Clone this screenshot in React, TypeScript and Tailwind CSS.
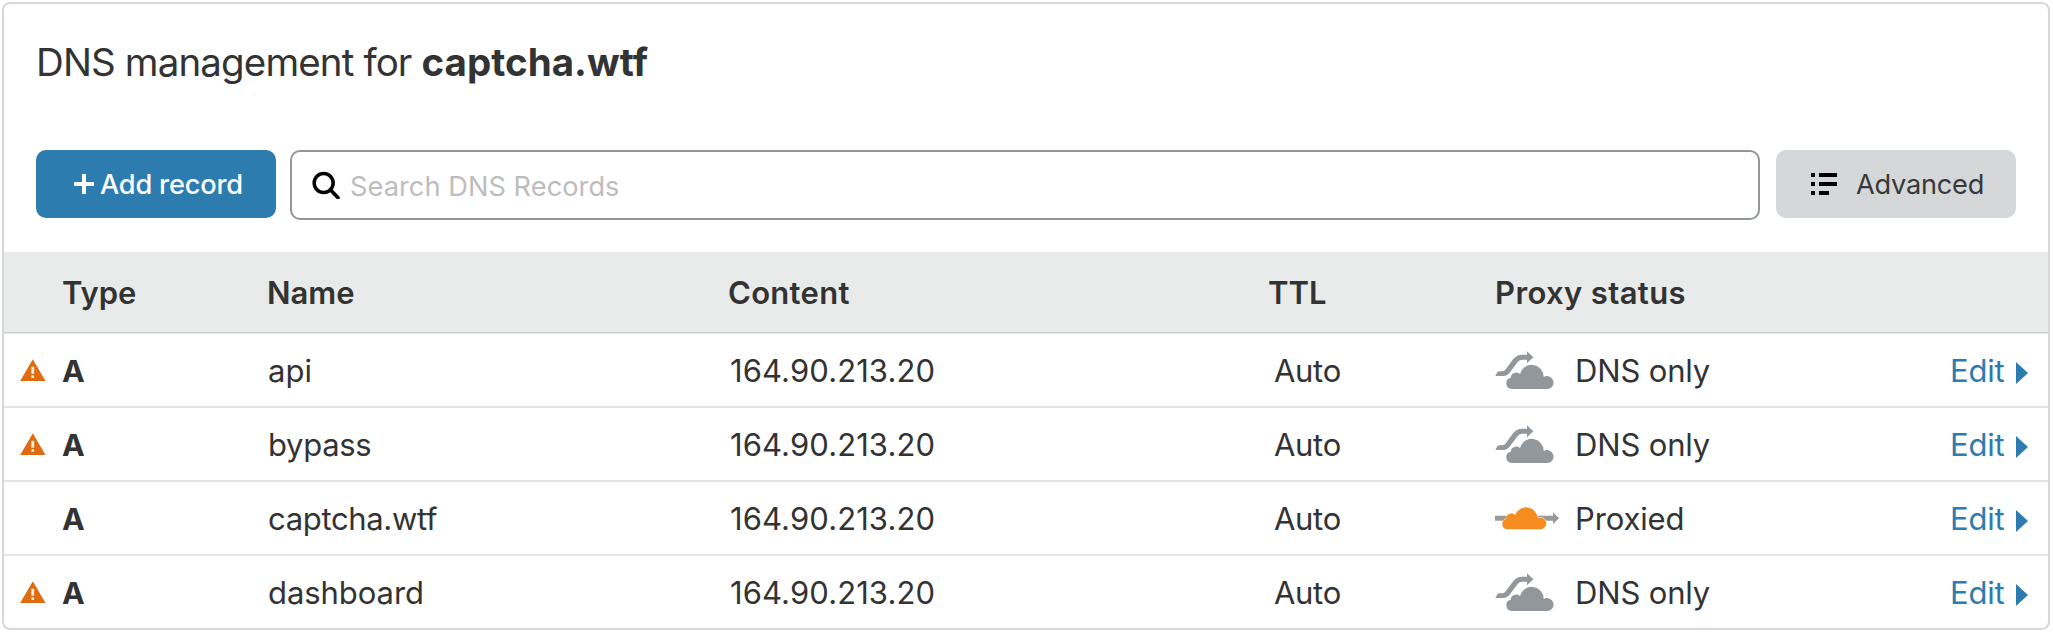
type DnsRecord = {
  name: string;
  nameClass: string;
  proxied: boolean;
  warning: boolean;
};

const records: DnsRecord[] = [
  { name: "api", nameClass: "", proxied: false, warning: true },
  { name: "bypass", nameClass: "tracking-[-0.3px]", proxied: false, warning: true },
  { name: "captcha.wtf", nameClass: "tracking-[-0.34px]", proxied: true, warning: false },
  { name: "dashboard", nameClass: "tracking-[-0.06px]", proxied: false, warning: true },
];

const columns = "grid grid-cols-[58px_205px_461px_540px_227px_455px_1fr] items-center";

function WarningIcon() {
  return (
    <svg viewBox="16 27 78 66" className="h-[22px] w-[26px]">
      <path d="M54.5 28 L92.5 93 H16.5 Z" fill="#e06b10" />
      <rect x="50" y="50" width="8.500" height="21" rx="2" fill="#fff" fillOpacity="0.900" />
      <rect x="50" y="76" width="8.500" height="8" rx="2" fill="#fff" fillOpacity="0.900" />
    </svg>
  );
}

function DnsOnlyIcon() {
  return (
    <svg viewBox="15 15 180 120" className="h-10 w-[60px]">
      <g fill="#92979b">
        <path d="M16 93 L22 82 Q24 79 28 79 H36 Q42 79 46 74 L70 42 Q81 29 96 29 H111 V18.5 L130 37 L111 55 V44 H97 Q89 44 83 51 L60 82 Q52 93 40 93 Z" />
        <path d="M65 132 A17 17 0 0 1 62 98.500 A17 17 0 0 1 90 87 A36 36 0 0 1 161 96 A19.500 19.500 0 1 1 174 132 Z" />
      </g>
    </svg>
  );
}

function ProxiedIcon() {
  return (
    <svg viewBox="15 -6 195 120" className="h-10 w-[65px]">
      <path d="M15 47 H189 V37 L207 54.500 L189 72 V62 H15 Z" fill="#999" />
      <path
        d="M50 88 A16 16 0 0 1 48 57 A16.500 16.500 0 0 1 76 45 A34.500 34.500 0 0 1 143 54 A18 18 0 1 1 154 88 Z"
        fill="#f68b1f"
        stroke="#fff"
        strokeWidth="3"
        paintOrder="stroke"
      />
    </svg>
  );
}

function SearchIcon() {
  return (
    <svg viewBox="36 35 84 84" className="h-7 w-7" fill="none" stroke="#000">
      <circle cx="71" cy="71" r="28.500" strokeWidth="10.500" />
      <path d="M92 92 L114 115" strokeWidth="11" strokeLinecap="round" />
    </svg>
  );
}

function ListIcon() {
  return (
    <svg viewBox="0 0 26 22" className="h-[22px] w-[26px]" fill="#000">
      <path d="M0 0h4v4H0zM8 0h18v4H8zM0 9h4v4H0zM8 9h18v4H8zM0 18h4v4H0zM8 18h10v4H8z" />
    </svg>
  );
}

export default function App() {
  return (
    <div className="h-[633px] w-[2053px] overflow-hidden bg-white p-0.5 font-['Inter','Liberation_Sans',sans-serif] text-[31px] text-[#333] [font-variant-ligatures:none]">
      <div className="h-[628px] w-[2048px] rounded-lg border-2 border-[#d5d7d8] bg-white">
        <h1 className="flex h-[146px] items-start pl-8 pt-[34px] text-[38.5px] leading-[48px]">
          <span className="whitespace-pre tracking-[-0.87px]">DNS management for </span>
          <strong className="font-bold tracking-[0.04px]">captcha.wtf</strong>
        </h1>

        <div className="flex h-[102px] items-start px-8 text-[27.2px]">
          <button className="flex h-[68px] w-60 items-center rounded-[10px] bg-[#2c7cb0] pl-[38px] text-white">
            <svg viewBox="0 0 20 20" className="h-5 w-5" fill="#fff">
              <path d="M8 0h4v8h8v4h-8v8H8v-8H0V8h8z" />
            </svg>
            <span className="pl-1.5 pt-[3px] font-medium tracking-[-0.2px]">Add record</span>
          </button>
          <div className="ml-3.5 flex h-[70px] w-[1470px] items-center rounded-[10px] border-2 border-[#92979b] pl-5">
            <SearchIcon />
            <span className="pl-2.5 pt-1 tracking-[0.05px] text-[#bdbdbd]">Search DNS Records</span>
          </div>
          <button className="ml-4 flex h-[68px] w-60 items-center rounded-[10px] bg-[#d5d7d8] pl-[35px] text-[#36393a]">
            <ListIcon />
            <span className="pl-[19px] pt-[3px] tracking-[-0.25px]">Advanced</span>
          </button>
        </div>

        <div className={`${columns} h-[81px] border-b border-[#cfd1d1] bg-[#e9ebea] pt-0.5 font-semibold`}>
          <span />
          <span>Type</span>
          <span>Name</span>
          <span className="tracking-[0.3px]">Content</span>
          <span>TTL</span>
          <span className="tracking-[0.38px]">Proxy status</span>
          <span />
        </div>

        <div className="border-t border-[#e6e6e6]">
          {records.map((record) => (
            <div
              key={record.name}
              className={`${columns} h-[74px] border-b-2 border-[#e3e3e3] last:h-[72px] last:border-b-0`}
            >
              <span className="pl-4">{record.warning && <WarningIcon />}</span>
              <span className="pt-0.5 text-[30.5px] font-bold">A</span>
              <span className={`pl-px pt-0.5 ${record.nameClass}`}>{record.name}</span>
              <span className="pl-0.5 pt-0.5 tracking-[0.1px]">164.90.213.20</span>
              <span className="pl-1.5 pt-0.5 tracking-[-0.3px]">Auto</span>
              <span className="flex items-center">
                <span className="w-20">{record.proxied ? <ProxiedIcon /> : <DnsOnlyIcon />}</span>
                <span className="pt-0.5 tracking-[-0.15px]">{record.proxied ? "Proxied" : "DNS only"}</span>
              </span>
              <a className="flex items-center text-[#2c7cb0]">
                <span className="w-[66px] pt-0.5 tracking-[-0.2px]">Edit</span>
                <svg viewBox="0 0 12 22" className="mt-1.5 h-[22px] w-3" fill="#2c7cb0">
                  <path d="M0 0 L12 11 L0 22 Z" />
                </svg>
              </a>
            </div>
          ))}
        </div>
      </div>
    </div>
  );
}
